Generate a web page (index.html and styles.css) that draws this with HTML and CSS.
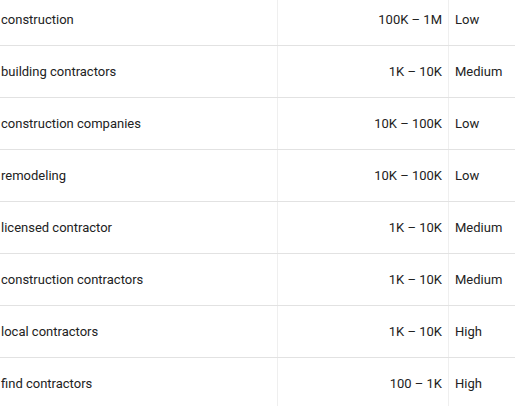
FILE: index.html
```html
<!DOCTYPE html>
<html>
<head>
<meta charset="utf-8">
<link rel="stylesheet" href="styles.css">
</head>
<body>
<div class="table">
  <div class="row"><div class="kw">construction</div><div class="range">100K – 1M</div><div class="level">Low</div></div>
  <div class="row"><div class="kw">building contractors</div><div class="range">1K – 10K</div><div class="level">Medium</div></div>
  <div class="row"><div class="kw">construction companies</div><div class="range">10K – 100K</div><div class="level">Low</div></div>
  <div class="row"><div class="kw">remodeling</div><div class="range">10K – 100K</div><div class="level">Low</div></div>
  <div class="row"><div class="kw">licensed contractor</div><div class="range">1K – 10K</div><div class="level">Medium</div></div>
  <div class="row"><div class="kw">construction contractors</div><div class="range">1K – 10K</div><div class="level">Medium</div></div>
  <div class="row"><div class="kw">local contractors</div><div class="range">1K – 10K</div><div class="level">High</div></div>
  <div class="row"><div class="kw">find contractors</div><div class="range">100 – 1K</div><div class="level">High</div></div>
</div>
</body>
</html>
```
FILE: styles.css
```css
html, body {
  margin: 0;
  padding: 0;
  background: #fff;
  overflow: hidden;
}
body {
  font-family: Roboto, "Liberation Sans", sans-serif;
  font-size: 13px;
  color: #222;
}
.table {
  margin-top: -6px;
  width: 515px;
}
.row {
  display: grid;
  grid-template-columns: 278px 171px 1fr;
  height: 51px;
  border-bottom: 1px solid #e2e2e2;
}
.row > div {
  display: flex;
  align-items: center;
}
.kw {
  padding-left: 1px;
  border-right: 1px solid #efefef;
}
.range {
  justify-content: flex-end;
  padding-right: 6px;
  border-right: 1px solid #efefef;
}
.level {
  padding-left: 6px;
}
```
